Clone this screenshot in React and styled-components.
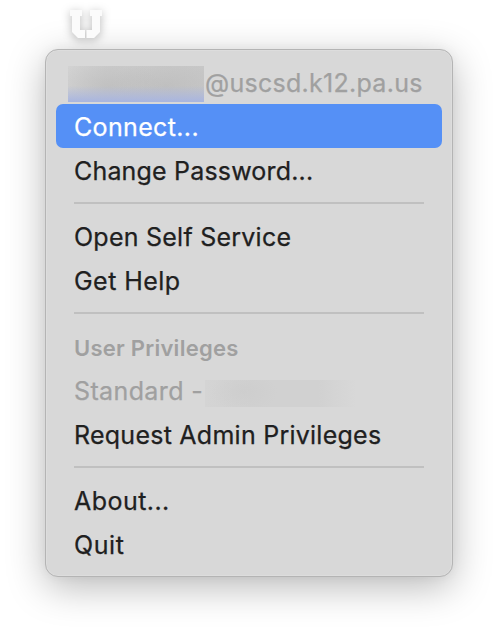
import styled, { createGlobalStyle } from "styled-components";

const GlobalStyle = createGlobalStyle`
  * {
    box-sizing: border-box;
  }

  body {
    margin: 0;
    background: #ffffff;
    font-family: Inter, "Liberation Sans", sans-serif;
    overflow: hidden;
  }
`;

const Screen = styled.div`
  width: 498px;
  height: 630px;
  display: flex;
  flex-direction: column;
  padding-left: 45px;
  overflow: hidden;
`;

const StatusIcon = styled.svg`
  width: 34px;
  height: 30px;
  flex: none;
  margin: 9px 0 10px 24px;
  overflow: visible;
  filter: drop-shadow(0 2px 5px rgba(0, 0, 0, 0.28));
`;

const Menu = styled.div`
  width: 408px;
  height: 528px;
  flex: none;
  padding: 10px;
  border: 1px solid #b4b4b4;
  border-radius: 13px;
  background: #d8d8d8;
  box-shadow: inset 0 0 0 1px #dddddd, 0 10px 38px rgba(0, 0, 0, 0.28), 0 0 12px rgba(0, 0, 0, 0.04);
`;

const Item = styled.div`
  height: 44px;
  display: flex;
  align-items: center;
  padding: 2px 0 0 18px;
  border-radius: 7px;
  font-size: 25px;
  line-height: 32px;
  white-space: nowrap;
  -webkit-text-stroke: 0.25px currentColor;
  letter-spacing: ${(props) => props.$spacing || 0}px;
  color: ${(props) => (props.$active ? "#ffffff" : props.$disabled ? "#a0a0a0" : "#202020")};
  background: ${(props) => (props.$active ? "#5590f6" : "transparent")};
`;

const SectionTitle = styled(Item)`
  padding-top: 4px;
  font-size: 22px;
  font-weight: 600;
  -webkit-text-stroke: 0;
  color: #a0a0a0;
`;

const Account = styled(Item)`
  padding: 2px 0 0 12px;
  color: #a0a0a0;
`;

const HiddenAccount = styled.span`
  width: 136px;
  height: 36px;
  flex: none;
  margin: 2px 1px 0 0;
  background:
    linear-gradient(to bottom, rgba(165, 179, 226, 0) 55%, #a8b5e0 100%),
    radial-gradient(ellipse 54px 26px at 40px 20px, rgba(184, 184, 184, 0.55), rgba(195, 195, 195, 0)),
    radial-gradient(ellipse 54px 26px at 98px 20px, rgba(184, 184, 184, 0.55), rgba(195, 195, 195, 0)),
    linear-gradient(to right, #d2d2d2, #cbcbcb 30%, #c7c7c7);
`;

const HiddenName = styled.span`
  width: 151px;
  height: 27px;
  flex: none;
  margin: 5px 0 0 2px;
  background:
    radial-gradient(ellipse 34px 20px at 39px 12px, rgba(203, 203, 203, 0.6), rgba(208, 208, 208, 0)),
    linear-gradient(to right, #d4d4d4, #d1d1d1 30%, #d1d1d1 75%, #d8d8d8);
`;

const Separator = styled.div`
  height: 2px;
  margin: 10px 18px;
  background: #c0c0c0;
`;

export default function App() {
  return (
    <>
      <GlobalStyle />
      <Screen>
        <StatusIcon viewBox="0 0 34 30">
          <path
            fill="#fbfbfb"
            d="M1 1H13V7H11V21H16V29H9L3 23V7H1ZM21 1H33V7H31V23L25 29H17.5V21H23V7H21Z"
          />
        </StatusIcon>
        <Menu>
          <Account $spacing={0.28}>
            <HiddenAccount />
            @uscsd.k12.pa.us
          </Account>
          <Item $active $spacing={0.35}>Connect...</Item>
          <Item $spacing={0.18}>Change Password...</Item>
          <Separator />
          <Item $spacing={0.24}>Open Self Service</Item>
          <Item $spacing={0.45}>Get Help</Item>
          <Separator />
          <SectionTitle $spacing={0.25}>User Privileges</SectionTitle>
          <Item $disabled $spacing={0.38}>
            Standard -
            <HiddenName />
          </Item>
          <Item $spacing={0.25}>Request Admin Privileges</Item>
          <Separator />
          <Item $spacing={0.45}>About...</Item>
          <Item $spacing={0.6}>Quit</Item>
        </Menu>
      </Screen>
    </>
  );
}
